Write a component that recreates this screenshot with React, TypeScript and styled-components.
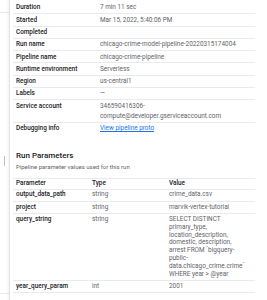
import { useLayoutEffect, useRef } from 'react';
import styled, { createGlobalStyle } from 'styled-components';

const details = [
  { label: 'Duration', value: '7 min 11 sec' },
  { label: 'Started', value: 'Mar 15, 2022, 5:40:06 PM' },
  { label: 'Completed', value: '' },
  { label: 'Run name', value: 'chicago-crime-model-pipeline-20220315174004' },
  { label: 'Pipeline name', value: 'chicago-crime-pipeline' },
  { label: 'Runtime environment', value: 'Serverless' },
  { label: 'Region', value: 'us-central1' },
  { label: 'Labels', value: '—' },
  { label: 'Service account', value: '346590416306-compute@developer.gserviceaccount.com' },
];

const params = [
  { name: 'output_data_path', type: 'string', value: 'crime_data.csv' },
  { name: 'project', type: 'string', value: 'marvik-vertex-tutorial' },
  {
    name: 'query_string',
    type: 'string',
    value:
      'SELECT DISTINCT primary_type, location_description, domestic, description, arrest FROM `bigquery-public-data.chicago_crime.crime` WHERE year > @year',
  },
  { name: 'year_query_param', type: 'int', value: '2001' },
];

export default function App() {
  const scrollRef = useRef<HTMLDivElement>(null);

  // the panel is shown scrolled to its end
  useLayoutEffect(() => {
    if (scrollRef.current) scrollRef.current.scrollTop = scrollRef.current.scrollHeight;
  }, []);

  return (
    <>
      <GlobalStyle />
      <Page>
        <Backdrop>
          <BackdropRow />
          <BackdropGap />
          <CursorMark />
          <BackdropFill />
          <BackdropFooter />
        </Backdrop>

        <Panel ref={scrollRef}>
          <PanelTitle>Run details</PanelTitle>

          {details.map((d) => (
            <Row key={d.label}>
              <Label>{d.label}</Label>
              <Value>{d.value}</Value>
            </Row>
          ))}
          <Row $last>
            <Label>Debugging info</Label>
            <Value>
              <Link href="#">View pipeline proto</Link>
            </Value>
          </Row>

          <SectionTitle>Run Parameters</SectionTitle>
          <SectionText>Pipeline parameter values used for this run</SectionText>

          <ParamTable>
            <ParamRow $header>
              <ParamName>Parameter</ParamName>
              <ParamName>Type</ParamName>
              <ParamName>Value</ParamName>
            </ParamRow>
            {params.map((p) => (
              <ParamRow key={p.name}>
                <ParamName>{p.name}</ParamName>
                <ParamCell>{p.type}</ParamCell>
                <ParamValue>{p.value}</ParamValue>
              </ParamRow>
            ))}
          </ParamTable>
        </Panel>
      </Page>
    </>
  );
}

const GlobalStyle = createGlobalStyle`
  html, body {
    margin: 0;
    padding: 0;
    background: #fff;
  }
  body {
    font-family: Roboto, "Liberation Sans", Arial, sans-serif;
    -webkit-font-smoothing: antialiased;
  }
`;

const Page = styled.div`
  display: flex;
  width: 267px;
  height: 300px;
  overflow: hidden;
  background: #fff;
`;

const Backdrop = styled.div`
  display: flex;
  flex-direction: column;
  width: 9px;
  flex-shrink: 0;
`;

const BackdropRow = styled.div`
  height: 12px;
  border-bottom: 1px solid #e8eaed;
`;

const BackdropGap = styled.div`
  height: 143px;
`;

const CursorMark = styled.div`
  width: 1px;
  height: 10px;
  margin-left: 4px;
  background: #bdc1c6;
`;

const BackdropFill = styled.div`
  flex: 1;
`;

const BackdropFooter = styled.div`
  height: 6px;
  border-top: 1px solid #e8eaed;
`;

const Panel = styled.div`
  flex: 1;
  height: 300px;
  overflow-y: scroll;
  border-left: 1px solid #e3e4e6;
  box-shadow: -1px 0 2px rgba(60, 64, 67, 0.08);
  padding: 0 12px 7px 3px;
  box-sizing: border-box;
  color: #202124;

  &::-webkit-scrollbar {
    width: 9px;
    background: #fff;
  }
  &::-webkit-scrollbar-thumb {
    background: #c6c6c6;
    border-style: solid;
    border-color: #fff;
    border-width: 0 1px 0 3px;
  }
`;

const PanelTitle = styled.div`
  font-size: 8px;
  font-weight: 500;
  line-height: 10px;
  padding: 36px 3px 30px;
`;

const Row = styled.div<{ $last?: boolean }>`
  display: grid;
  grid-template-columns: 87px 1fr;
  padding: 0.45px 0;
  line-height: 10.4px;
  font-size: 6.4px;
  border-bottom: ${(p) => (p.$last ? 'none' : '1px solid #e8eaed')};
`;

const Label = styled.div`
  padding-left: 3px;
  font-weight: 500;
  color: #202124;
`;

const Value = styled.div`
  color: #5f6368;
  padding-right: 3px;
  word-break: break-word;
`;

const Link = styled.a`
  color: #1a73e8;
  text-decoration: underline;
`;

const SectionTitle = styled.div`
  margin-top: 16.3px;
  padding-left: 3px;
  font-size: 8px;
  font-weight: 500;
  line-height: 10px;
  color: #202124;
`;

const SectionText = styled.div`
  margin-top: 2.3px;
  padding-left: 3px;
  font-size: 6px;
  line-height: 8px;
  color: #5f6368;
`;

const ParamTable = styled.div`
  margin-top: 7px;
  border-top: 1px solid #e8eaed;
`;

const ParamRow = styled.div<{ $header?: boolean }>`
  display: grid;
  grid-template-columns: 76px 77px 1fr;
  padding: ${(p) => (p.$header ? '1px 0 1px' : '1.75px 0')};
  line-height: 7.8px;
  font-size: 6.4px;
  border-bottom: 1px solid #e8eaed;
`;

const ParamName = styled.div`
  padding: 0 3px;
  font-weight: 500;
  color: #202124;
`;

const ParamCell = styled.div`
  padding: 0 3px;
  color: #5f6368;
`;

const ParamValue = styled(ParamCell)`
  padding-right: 10px;
`;
